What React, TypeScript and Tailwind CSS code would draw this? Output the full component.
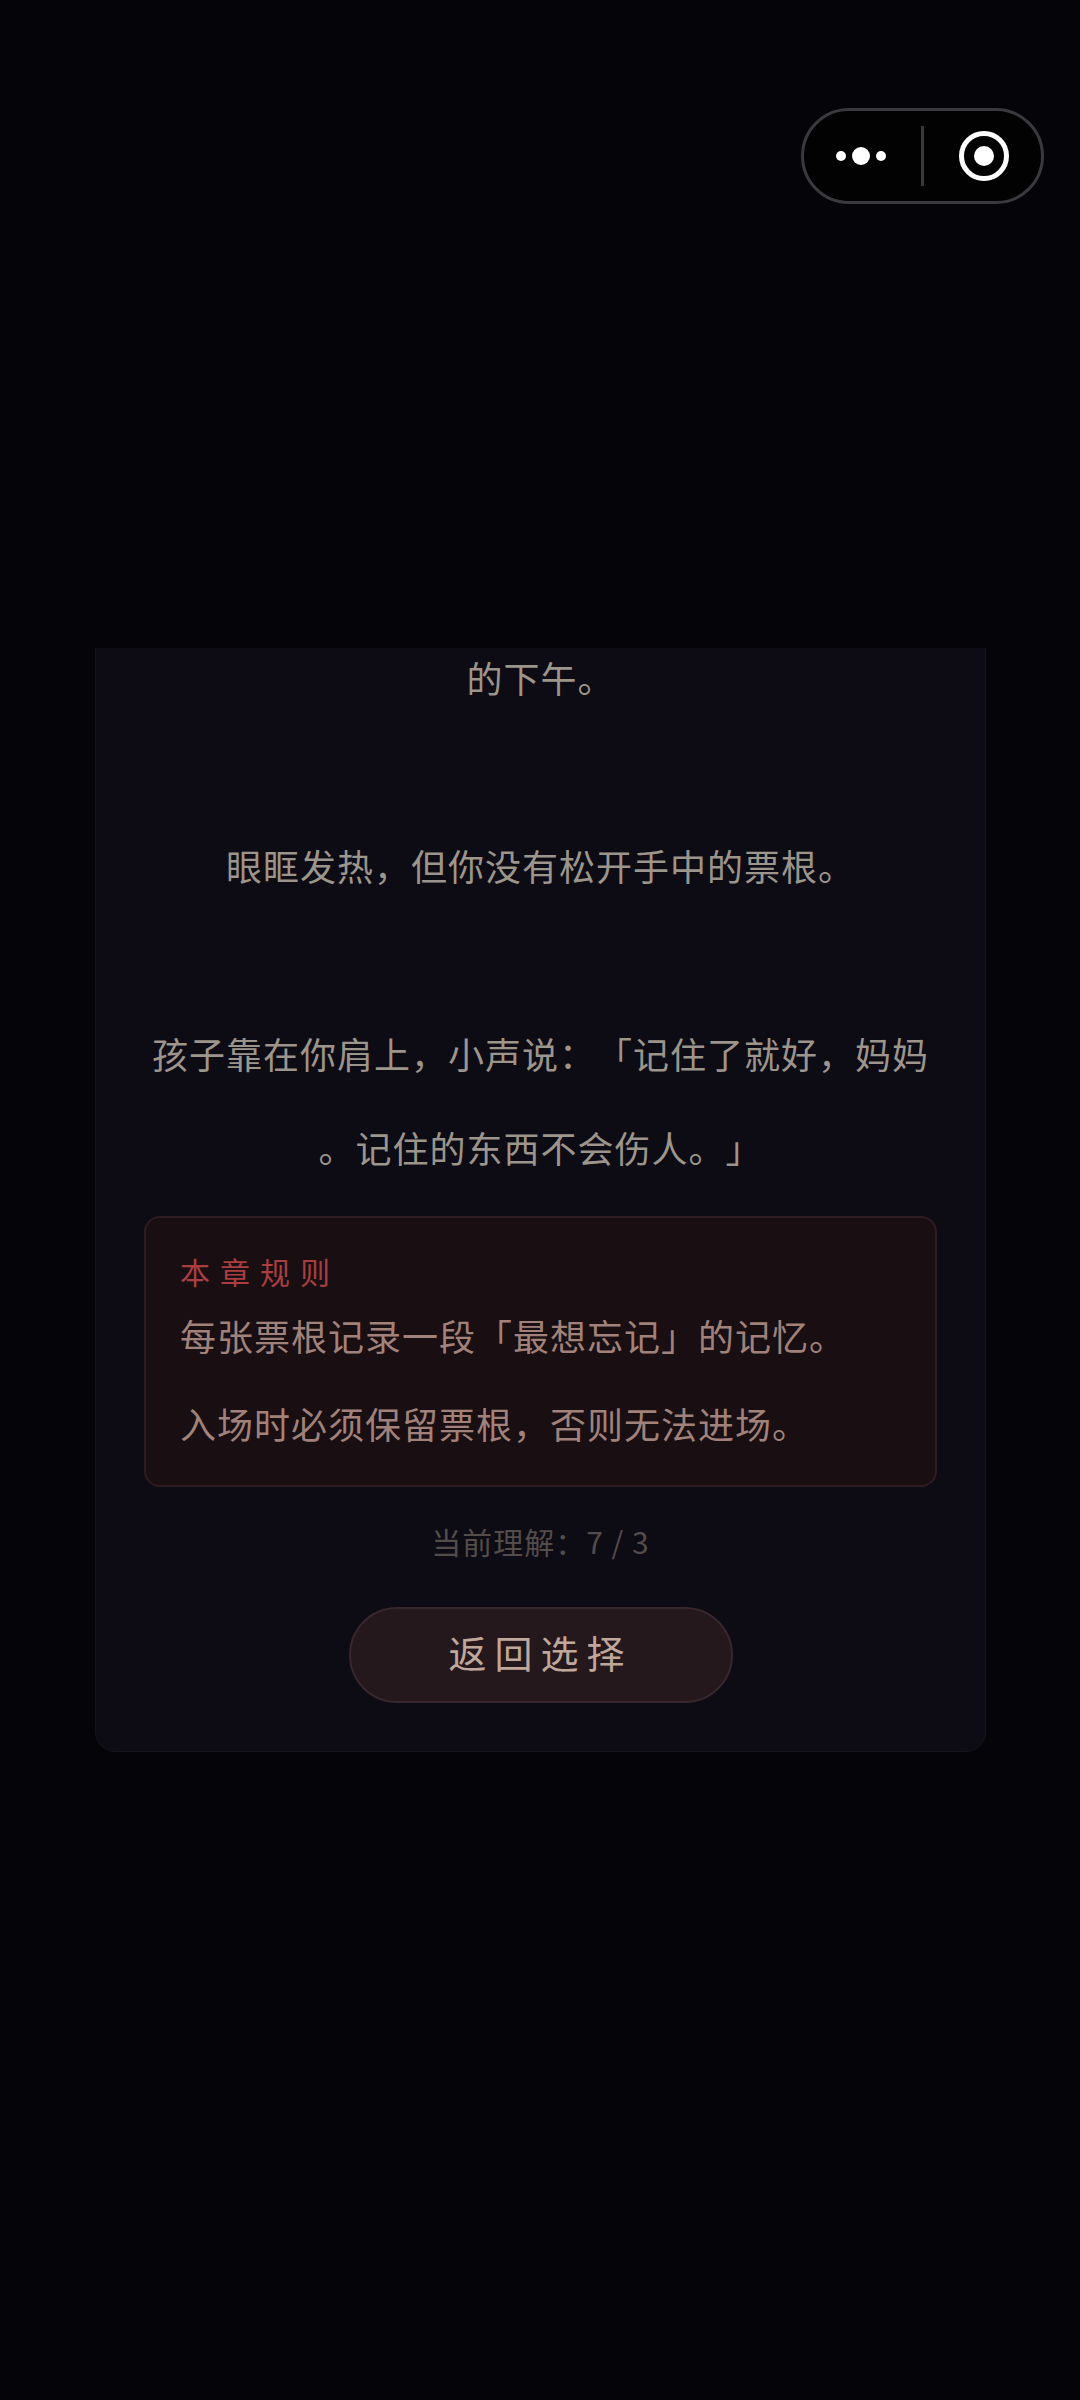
const story = [
  "的下午。",
  "",
  "眼眶发热，但你没有松开手中的票根。",
  "",
  "孩子靠在你肩上，小声说：「记住了就好，妈妈",
  "。记住的东西不会伤人。」",
];

const rules = [
  "每张票根记录一段「最想忘记」的记忆。",
  "入场时必须保留票根，否则无法进场。",
];

function Capsule() {
  return (
    <div className="absolute top-27 right-9 flex h-24 items-center rounded-full border-3 border-[#3a3a3e] bg-[#020203]">
      <button type="button" aria-label="更多">
        <svg width="117" height="60" viewBox="0 0 117 60" fill="#fff">
          <circle cx="37" cy="30" r="5" />
          <circle cx="57" cy="30" r="9" />
          <circle cx="77" cy="30" r="5" />
        </svg>
      </button>
      <span className="h-15 w-[3px] bg-[#3a3a3e]" />
      <button type="button" aria-label="关闭">
        <svg width="117" height="60" viewBox="0 0 117 60" fill="#fff">
          <circle cx="60" cy="30" r="22.5" fill="none" stroke="#fff" strokeWidth="5" />
          <circle cx="60" cy="30" r="10" />
        </svg>
      </button>
    </div>
  );
}

export default function App() {
  return (
    <div className="relative flex min-h-screen items-center bg-[#050509] font-['Noto_Sans_CJK_SC',sans-serif] [text-spacing-trim:space-all]">
      <Capsule />

      {/* the chapter is scrolled to its end, the top of the card is cut off */}
      <main className="flex h-[46vh] w-full flex-col justify-end overflow-hidden pr-[94px] pl-[95px]">
        <article className="flex shrink-0 flex-col rounded-[20px] border border-[#15141b] bg-[#0d0b13] p-12">
          <div className="text-center text-[36px] leading-[94px] tracking-[1px] text-[#9c958c]">
            {story.map((line, i) => (
              <p key={i} className="min-h-[94px] whitespace-nowrap">
                {line}
              </p>
            ))}
          </div>

          <section className="mt-[22px] rounded-2xl border-2 border-[#2e1c20] bg-[#190e12] px-[34px] pt-[33px] pb-[18px]">
            <h2 className="text-[30px] leading-10 tracking-[10px] text-[#a83e40]">本章规则</h2>
            <div className="text-[36px] leading-[88px] tracking-[1px] text-[#a0827b]">
              {rules.map((rule) => (
                <p key={rule}>{rule}</p>
              ))}
            </div>
          </section>

          <p className="mt-[34px] text-center text-[30px] leading-10 tracking-[1px] text-[#544b4b]">
            当前理解：7 / 3
          </p>

          <button
            type="button"
            className="mt-[46px] h-24 w-96 self-center rounded-full border-2 border-[#38272c] bg-[#24181d] pb-2 text-[38px] tracking-[8px] text-[#c0a79b]"
          >
            返回选择
          </button>
        </article>
      </main>
    </div>
  );
}
